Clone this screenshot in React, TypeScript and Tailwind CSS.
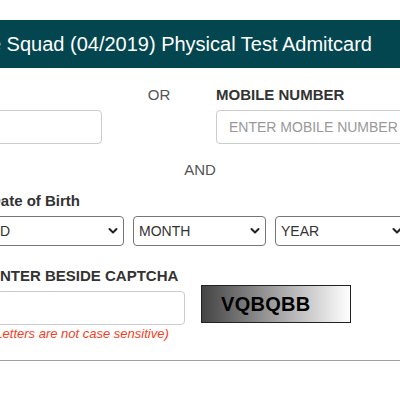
import { useState } from 'react';

const font = { fontFamily: '"Liberation Sans", Arial, sans-serif' };

function Chevron() {
  return (
    <svg
      className="pointer-events-none absolute right-[6px] top-1/2 -translate-y-1/2"
      width="10"
      height="7"
      viewBox="0 0 10 7"
      fill="none"
    >
      <path d="M1.5 1.5l3.5 3.5 3.5-3.5" stroke="#222" strokeWidth="2" strokeLinecap="round" strokeLinejoin="round" />
    </svg>
  );
}

function DobSelect({ value, options, className }: { value: string; options: string[]; className: string }) {
  const [v, setV] = useState(value);
  return (
    <div className={`relative shrink-0 ${className}`}>
      <select
        value={v}
        onChange={e => setV(e.target.value)}
        className="h-[30px] w-full appearance-none rounded-[4px] border border-[#767676] bg-white pl-[5px] text-[14px] text-[#333] outline-none"
      >
        {options.map(o => (
          <option key={o}>{o}</option>
        ))}
      </select>
      <Chevron />
    </div>
  );
}

export default function App() {
  const [mobile, setMobile] = useState('');
  const [captcha, setCaptcha] = useState('');

  return (
    <div className="min-h-[398px] w-[400px] overflow-hidden bg-white pt-5" style={font}>
      <div className="flex h-12 items-center justify-end overflow-hidden whitespace-nowrap bg-[#03464f] pr-[28px] text-[20px] text-white">
        Home Guard / Fire Squad (04/2019) Physical Test Admitcard
      </div>

      {/* roll / mobile row */}
      <div className="mt-[17px] flex items-start">
        <div className="ml-[-60px] w-[162px] shrink-0">
          <div className="h-5" />
          <input className="mt-[5px] h-[34px] w-full rounded-[4px] border border-[#ccc] px-3 text-[14px] outline-none" />
        </div>
        <div className="w-[114px] shrink-0 text-center text-[15px] leading-5 text-[#555]">OR</div>
        <div className="flex-1">
          <label className="block text-[15px] font-bold leading-5 text-[#333]">MOBILE NUMBER</label>
          <input
            value={mobile}
            onChange={e => setMobile(e.target.value)}
            placeholder="ENTER MOBILE NUMBER"
            className="mt-[5px] h-[34px] w-[200px] rounded-[4px] border border-[#ccc] pl-[12px] text-[14px] text-[#555] outline-none placeholder:text-[#999]"
          />
        </div>
      </div>

      <div className="mt-4 text-center text-[15px] leading-5 text-[#555]">AND</div>

      {/* date of birth */}
      <div className="ml-[-10px] mt-[11px]">
        <label className="block text-[15px] font-bold leading-5 text-[#333]">Date of Birth</label>
        <div className="ml-[-6px] mt-[5px] flex gap-[9px]">
          <DobSelect value="DD" options={['DD']} className="w-[140px]" />
          <DobSelect value="MONTH" options={['MONTH']} className="w-[133px]" />
          <DobSelect value="YEAR" options={['YEAR']} className="w-[133px]" />
        </div>
      </div>

      {/* captcha */}
      <div className="ml-[-10px] mt-[20px] flex items-start">
        <div className="w-[195px] shrink-0">
          <label className="block text-[15px] font-bold leading-5 text-[#333]">ENTER BESIDE CAPTCHA</label>
          <input
            value={captcha}
            onChange={e => setCaptcha(e.target.value)}
            className="mt-[5px] h-[34px] w-full rounded-[4px] border border-[#ccc] px-3 text-[14px] outline-none"
          />
          <p className="ml-[1px] text-[13px] italic leading-[18px] text-[#f5401e]">(Letters are not case sensitive)</p>
        </div>
        <div className="ml-[16px] mt-[19px] flex h-[38px] w-[150px] shrink-0 items-center border border-[#222] bg-[linear-gradient(to_right,#444,#fff)] pl-[19px] text-[20px] font-bold tracking-[0.3px] text-black">
          VQBQBB
        </div>
      </div>

      <hr className="mt-[17px] border-t border-[#a0a0a0]" />
    </div>
  );
}
